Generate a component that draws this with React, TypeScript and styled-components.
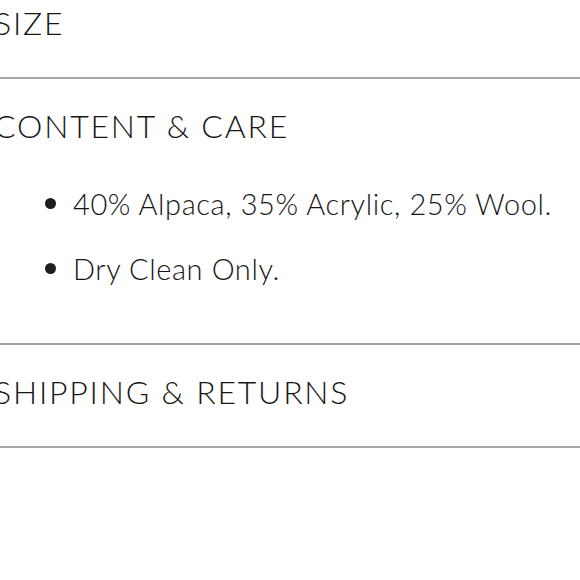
import React from 'react';
import styled, { createGlobalStyle } from 'styled-components';

const GlobalStyle = createGlobalStyle`
  html, body {
    margin: 0;
    padding: 0;
    background: #ffffff;
    overflow: hidden;
  }
  body {
    font-family: Lato, "Noto Sans", "Liberation Sans", sans-serif;
    color: #161616;
  }
`;

const StyledRoot = styled.div`
  width: 600px;
  margin-top: -24px;
  margin-left: -6px;
`;

const StyledSection = styled.section`
  border-bottom: 2px solid #a6a6a6;
`;

const StyledHeader = styled.button`
  display: block;
  width: 100%;
  padding: 28px 0 35px;
  border: 0;
  background: transparent;
  text-align: left;
  font-family: inherit;
  font-size: 32px;
  line-height: 38px;
  font-weight: 300;
  letter-spacing: 1.8px;
  text-transform: uppercase;
  color: #161616;
  cursor: pointer;
`;

const StyledList = styled.ul`
  list-style: none;
  margin: 0;
  padding: 4px 0 54px 51px;
  display: flex;
  flex-direction: column;
  gap: 25px;
`;

const StyledItem = styled.li`
  display: flex;
  align-items: center;
  font-size: 29px;
  line-height: 40px;
  font-weight: 300;
  letter-spacing: 0.6px;
  &::before {
    content: '';
    flex: none;
    width: 11px;
    height: 11px;
    margin-right: 17px;
    margin-top: -2px;
    border-radius: 50%;
    background: #1e1e1e;
  }
`;

const sections = [
  { title: 'Size', items: [] as string[] },
  {
    title: 'Content & Care',
    items: ['40% Alpaca, 35% Acrylic, 25% Wool.', 'Dry Clean Only.'],
  },
  { title: 'Shipping & Returns', items: [] as string[] },
];

export default function App() {
  return (
    <>
      <GlobalStyle />
      <StyledRoot>
        {sections.map(section => (
          <StyledSection key={section.title}>
            <StyledHeader type="button">{section.title}</StyledHeader>
            {section.items.length > 0 && (
              <StyledList>
                {section.items.map(item => (
                  <StyledItem key={item}>{item}</StyledItem>
                ))}
              </StyledList>
            )}
          </StyledSection>
        ))}
      </StyledRoot>
    </>
  );
}
